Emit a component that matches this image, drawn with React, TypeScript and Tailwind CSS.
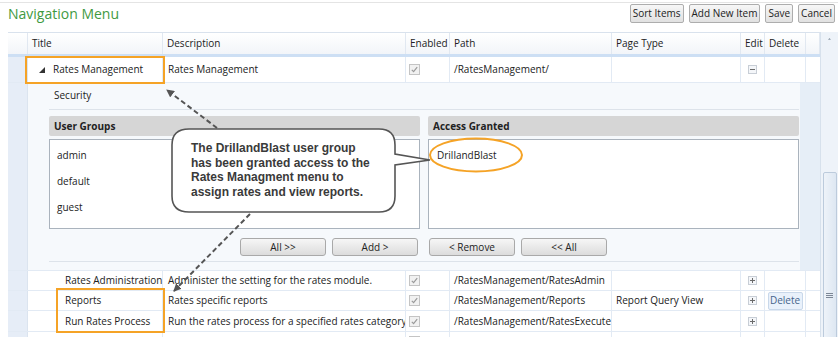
import React from 'react';

const cols = [20, 135, 243, 44, 162, 129, 24, 41, 14];

function Check() {
  return (
    <svg width="11" height="11" viewBox="0 0 11 11" className="block">
      <rect x="0.5" y="0.5" width="10" height="10" fill="#f1f1f1" stroke="#c4c4c4" />
      <path d="M2.8 5.8 L4.6 7.6 L8.2 3.2" fill="none" stroke="#9a9a9a" strokeWidth="1.2" />
    </svg>
  );
}

function Toggle({ plus }: { plus?: boolean }) {
  return (
    <svg width="9" height="9" viewBox="0 0 9 9" className="block">
      <rect x="0.5" y="0.5" width="8" height="8" fill="#f4f6f9" stroke="#c8ced6" />
      <path d="M2 4.5 H7" stroke="#6b6b6b" strokeWidth="1" />
      {plus && <path d="M4.5 2 V7" stroke="#6b6b6b" strokeWidth="1" />}
    </svg>
  );
}

function GridRow({
  height,
  title,
  indent,
  desc,
  path,
  pageType,
  toggle,
  del,
  expander,
}: {
  height: number;
  title: string;
  indent: number;
  desc: string;
  path: string;
  pageType?: string;
  toggle: 'plus' | 'minus';
  del?: boolean;
  expander?: boolean;
}) {
  return (
    <div className="flex border-b border-[#e2eaf4] bg-white" style={{ height }}>
      <div className="bg-[#e6edf7] border-r border-[#dbe4ef]" style={{ width: cols[0] }} />
      <div className="flex items-center border-r border-[#e2eaf4] whitespace-nowrap" style={{ width: cols[1], paddingLeft: indent }}>
        {expander && (
          <svg width="6" height="6" viewBox="0 0 6 6" className="mr-[8px] ml-[-15px]">
            <polygon points="6,0 6,6 0,6" fill="#333" />
          </svg>
        )}
        {title}
      </div>
      <div className="flex items-center pl-[5px] border-r border-[#e2eaf4] whitespace-nowrap overflow-hidden" style={{ width: cols[2] }}>
        {desc}
      </div>
      <div className="flex items-center pl-[3px] border-r border-[#e2eaf4]" style={{ width: cols[3] }}>
        <Check />
      </div>
      <div className="flex items-center pl-[4px] border-r border-[#e2eaf4] whitespace-nowrap overflow-hidden" style={{ width: cols[4] }}>
        {path}
      </div>
      <div className="flex items-center pl-[4px] border-r border-[#e2eaf4] whitespace-nowrap" style={{ width: cols[5] }}>
        {pageType}
      </div>
      <div className="flex items-center justify-center border-r border-[#e2eaf4]" style={{ width: cols[6] }}>
        <Toggle plus={toggle === 'plus'} />
      </div>
      <div className="flex items-center justify-center border-r border-[#e2eaf4]" style={{ width: cols[7] }}>
        {del && (
          <div className="h-[18px] w-[35px] flex items-center justify-center bg-[#e9f1fb] border border-[#c9d8ea] rounded-[2px] text-[#46648c]">
            Delete
          </div>
        )}
      </div>
      <div style={{ width: cols[8] }} />
    </div>
  );
}

function ListButton({ label }: { label: string }) {
  return (
    <div className="w-[86px] h-[18px] flex items-center justify-center rounded-[3px] border border-[#a9a9a9] bg-gradient-to-b from-[#f6f6f6] to-[#dcdcdc] text-[#222]">
      {label}
    </div>
  );
}

function TopButton({ label }: { label: string }) {
  return (
    <div className="h-[19px] px-[2px] flex items-center rounded-[2px] border border-[#adadad] bg-gradient-to-b from-[#f7f7f7] to-[#e1e1e1] text-[#222]">
      {label}
    </div>
  );
}

export default function App() {
  const headers = ['', 'Title', 'Description', 'Enabled', 'Path', 'Page Type', 'Edit', 'Delete', ''];
  return (
    <div className="relative w-[838px] h-[337px] overflow-hidden bg-white text-[10px] text-[#222] font-['Open_Sans',sans-serif]">
      <div className="h-[3px] border-b border-[#e4e4e4]" />

      {/* Title bar */}
      <div className="flex items-center justify-between h-[21px] pl-[8px] pr-[3px]">
        <h1 className="text-[14px] text-[#3f9a3f] leading-none">Navigation Menu</h1>
        <div className="flex gap-[5px]">
          <TopButton label="Sort Items" />
          <TopButton label="Add New Item" />
          <TopButton label="Save" />
          <TopButton label="Cancel" />
        </div>
      </div>

      {/* Grid */}
      <div className="flex mt-[8px] ml-[8px]">
        <div className="w-[812px] flex flex-col border-t border-[#d9e2ed]">
          <div className="flex h-[24px] bg-gradient-to-b from-white to-[#f2f5f9] border-b-[3px] border-[#cddff4]">
            {headers.map((h, i) => (
              <div
                key={i}
                className="flex items-center pl-[4px] border-r border-[#e1e8f1] whitespace-nowrap"
                style={{ width: cols[i] }}
              >
                {h}
              </div>
            ))}
          </div>

          <GridRow
            height={26}
            title="Rates Management"
            indent={26}
            expander
            desc="Rates Management"
            path="/RatesManagement/"
            toggle="minus"
          />

          {/* Details */}
          <div className="flex h-[187px]">
            <div className="w-[20px] bg-[#e6edf7] border-r border-[#dbe4ef]" />
            <div className="flex-1 flex bg-[#f6f9fc]">
              <div className="w-[750px] ml-[21px] flex flex-col">
                <div className="h-[27px] border-b border-[#dde3ea] pl-[5px] pt-[5px]">Security</div>
                <div className="grid grid-cols-2 gap-[8px] mt-[6px]">
                  <div className="flex flex-col">
                    <div className="h-[20px] flex items-center pl-[5px] bg-[#d6d6d6] rounded-[2px] font-bold">User Groups</div>
                    <div className="h-[90px] mt-[3px] bg-white border border-[#aab3bd] pl-[7px] pt-[6px] flex flex-col gap-[8px]">
                      <div className="h-[18px] flex items-center">admin</div>
                      <div className="h-[18px] flex items-center">default</div>
                      <div className="h-[18px] flex items-center">guest</div>
                    </div>
                    <div className="flex justify-end gap-[6px] mt-[9px] pr-[2px]">
                      <ListButton label="All >>" />
                      <ListButton label="Add >" />
                    </div>
                  </div>
                  <div className="flex flex-col">
                    <div className="h-[20px] flex items-center pl-[5px] bg-[#d6d6d6] rounded-[2px] font-bold">Access Granted</div>
                    <div className="h-[90px] mt-[3px] bg-white border border-[#aab3bd] pl-[8px] pt-[6px] flex flex-col">
                      <div className="h-[18px] flex items-center">DrillandBlast</div>
                    </div>
                    <div className="flex gap-[6px] mt-[9px] pl-[1px]">
                      <ListButton label="< Remove" />
                      <ListButton label="<< All" />
                    </div>
                  </div>
                </div>
                <div className="mt-[5px] border-b border-[#dde3ea]" />
              </div>
              <div className="ml-auto w-[20px] bg-[#e6eef7]" />
            </div>
          </div>

          <div className="border-t border-[#e2eaf4]" />
          <GridRow
            height={20}
            title="Rates Administration"
            indent={37}
            desc="Administer the setting for the rates module."
            path="/RatesManagement/RatesAdmin"
            toggle="plus"
          />
          <GridRow
            height={20}
            title="Reports"
            indent={37}
            desc="Rates specific reports"
            path="/RatesManagement/Reports"
            pageType="Report Query View"
            toggle="plus"
            del
          />
          <GridRow
            height={21}
            title="Run Rates Process"
            indent={37}
            desc="Run the rates process for a specified rates category"
            path="/RatesManagement/RatesExecute"
            toggle="plus"
          />
          <GridRow height={20} title="" indent={37} desc="" path="" toggle="plus" />
        </div>

        {/* Scrollbar */}
        <div className="w-[18px] h-[320px] flex flex-col items-center bg-[#eef3f9] border-l border-[#d7e1ec]">
          <svg width="7" height="4" viewBox="0 0 7 4" className="mt-[6px]">
            <polygon points="3.5,0 7,4 0,4" fill="#8a96a4" />
          </svg>
          <div className="mt-[132px] w-[14px] h-[260px] rounded-[2px] border border-[#bccbdc] bg-gradient-to-r from-[#eef3f9] to-[#dde7f2] flex flex-col items-center pt-[120px]">
            <svg width="7" height="5" viewBox="0 0 7 5">
              <path d="M0 0.5 H7 M0 2.5 H7 M0 4.5 H7" stroke="#7c8796" strokeWidth="1" />
            </svg>
          </div>
        </div>
      </div>

      {/* Annotation overlay */}
      <svg className="absolute inset-0 pointer-events-none" width="838" height="337" viewBox="0 0 838 337">
        <defs>
          <marker id="ah" markerWidth="8" markerHeight="8" refX="7" refY="4" orient="auto" markerUnits="userSpaceOnUse">
            <path d="M0 0 L8 4 L0 8 Z" fill="#555" />
          </marker>
        </defs>
        <rect x="26" y="57" width="138" height="26" fill="none" stroke="#f5a326" strokeWidth="2" />
        <rect x="57" y="289" width="107" height="43" fill="none" stroke="#f5a326" strokeWidth="2" />
        <ellipse cx="476" cy="155" rx="46" ry="16.5" fill="none" stroke="#f5a326" strokeWidth="2" />
        <line x1="217" y1="128" x2="167" y2="90" stroke="#555" strokeWidth="2" strokeDasharray="5 3" markerEnd="url(#ah)" />
        <line x1="250" y1="214" x2="174" y2="291" stroke="#555" strokeWidth="2" strokeDasharray="5 3" markerEnd="url(#ah)" />
        <path
          d="M189 129 H379 Q395 129 395 145 V154 L430 160 L395 165 V196 Q395 212 379 212 H189 Q172 212 172 196 V145 Q172 129 189 129 Z"
          fill="#ffffff"
          stroke="#555"
          strokeWidth="1.6"
        />
      </svg>
      <div className="absolute left-[191px] top-[141px] font-['Liberation_Sans',Arial,sans-serif] font-bold text-[12px] leading-[14.5px] text-[#3a3a3a] whitespace-nowrap">
        <div>The DrillandBlast user group</div>
        <div>has been granted access to the</div>
        <div>Rates Managment menu to</div>
        <div>assign rates and view reports.</div>
      </div>
    </div>
  );
}
